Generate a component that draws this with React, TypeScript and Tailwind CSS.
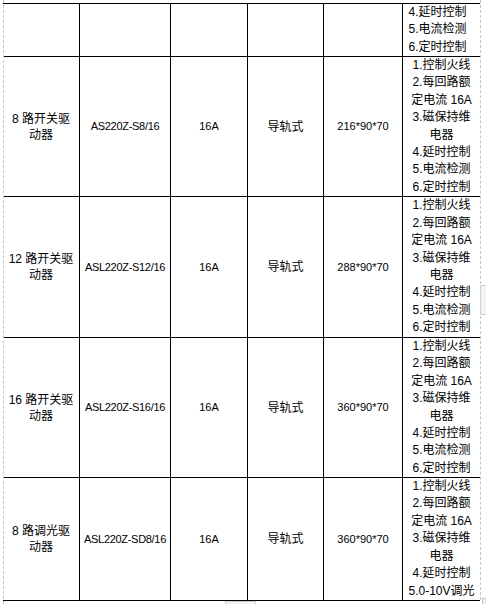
import React from "react";

const specs = [
  "1.控制火线",
  "2.每回路额",
  "定电流 16A",
  "3.磁保持维",
  "电器",
  "4.延时控制",
  "5.电流检测",
  "6.定时控制",
];

const dimSpecs = [
  "1.控制火线",
  "2.每回路额",
  "定电流 16A",
  "3.磁保持维",
  "电器",
  "4.延时控制",
  "5.0-10V调光",
];

const rows = [
  { name: ["8 路开关驱", "动器"], model: "AS220Z-S8/16", size: "216*90*70", h: "h-[140px]", specs },
  { name: ["12 路开关驱", "动器"], model: "ASL220Z-S12/16", size: "288*90*70", h: "h-[141px]", specs },
  { name: ["16 路开关驱", "动器"], model: "ASL220Z-S16/16", size: "360*90*70", h: "h-[140px]", specs },
  { name: ["8 路调光驱", "动器"], model: "ASL220Z-SD8/16", size: "360*90*70", h: "h-[123px]", specs: dimSpecs },
];

const cell = "flex flex-col items-center justify-center text-center border-b border-black";

export default function App() {
  return (
    <div className="relative w-[486px] h-[604px] overflow-hidden bg-white text-black font-[family-name:'Liberation_Sans','Noto_Sans_CJK_SC',sans-serif]">
      <div className="ml-[3px] mt-[3px] w-[477px] border-t border-black">
        {/* clipped tail of the row above */}
        <div className="flex h-[53px]">
          <div className={`${cell} w-[77px] border-r`} />
          <div className={`${cell} w-[91px] border-r`} />
          <div className={`${cell} w-[77px] border-r`} />
          <div className={`${cell} w-[76px] border-r`} />
          <div className={`${cell} w-[79px] border-r`} />
          <div className={`${cell} w-[77px] justify-end pr-[8px] text-[12px] leading-[17.4px]`}>
            {specs.slice(5).map((s) => (
              <div key={s}>{s}</div>
            ))}
          </div>
        </div>

        {rows.map((r) => (
          <div key={r.model} className={`flex ${r.h}`}>
            <div className={`${cell} w-[77px] border-r text-[12px] leading-[16px]`}>
              {r.name.map((n) => (
                <div key={n}>{n}</div>
              ))}
            </div>
            <div className={`${cell} w-[91px] border-r text-[11px] tracking-[-0.3px]`}>{r.model}</div>
            <div className={`${cell} w-[77px] border-r text-[11px]`}>16A</div>
            <div className={`${cell} w-[76px] border-r text-[12px]`}>导轨式</div>
            <div className={`${cell} w-[79px] border-r text-[11px]`}>{r.size}</div>
            <div className={`${cell} w-[77px] text-[12px] leading-[17.4px] overflow-hidden`}>
              {r.specs.map((s) => (
                <div key={s} className="whitespace-nowrap">{s}</div>
              ))}
            </div>
          </div>
        ))}
      </div>

      {/* page-break guides */}
      <div className="absolute left-[3px] top-0 h-full border-l border-dashed border-[#c4c4c4]" />
      <div className="absolute left-[480px] top-0 h-[600px] border-l border-dashed border-[#c4c4c4]" />
      <div className="absolute left-[480px] top-[285px] w-[8px] h-[30px] border border-[#d0d0d0] bg-[#f4f4f4]" />
      <div className="absolute left-[225px] top-[601px] w-[31px] h-[6px] border border-[#d0d0d0] bg-[#f4f4f4]" />
      <div className="absolute left-[482px] top-[598px] w-[6px] h-[8px] border border-[#c4c4c4] bg-[#eeeeee]" />
    </div>
  );
}
